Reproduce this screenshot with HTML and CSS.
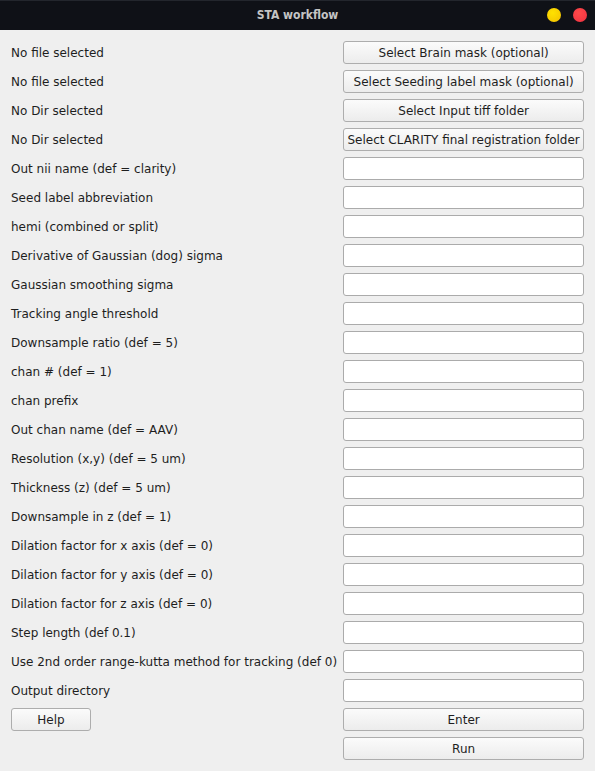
FILE: index.html
```html
<!DOCTYPE html>
<html>
<head>
<meta charset="utf-8">
<link rel="stylesheet" href="styles.css">
</head>
<body>
<div class="titlebar">
  <span class="title">STA workflow</span>
  <div class="controls">
    <span class="dot dot-min"></span>
    <span class="dot dot-close"></span>
  </div>
</div>
<div class="form">
  <span class="label">No file selected</span><button class="btn">Select Brain mask (optional)</button>
  <span class="label">No file selected</span><button class="btn">Select Seeding label mask (optional)</button>
  <span class="label">No Dir selected</span><button class="btn">Select Input tiff folder</button>
  <span class="label">No Dir selected</span><button class="btn">Select CLARITY final registration folder</button>
  <span class="label">Out nii name (def = clarity)</span><input class="field" type="text">
  <span class="label">Seed label abbreviation</span><input class="field" type="text">
  <span class="label">hemi (combined or split)</span><input class="field" type="text">
  <span class="label">Derivative of Gaussian (dog) sigma</span><input class="field" type="text">
  <span class="label">Gaussian smoothing sigma</span><input class="field" type="text">
  <span class="label">Tracking angle threshold</span><input class="field" type="text">
  <span class="label">Downsample ratio (def = 5)</span><input class="field" type="text">
  <span class="label">chan # (def = 1)</span><input class="field" type="text">
  <span class="label">chan prefix</span><input class="field" type="text">
  <span class="label">Out chan name (def = AAV)</span><input class="field" type="text">
  <span class="label">Resolution (x,y) (def = 5 um)</span><input class="field" type="text">
  <span class="label">Thickness (z) (def = 5 um)</span><input class="field" type="text">
  <span class="label">Downsample in z (def = 1)</span><input class="field" type="text">
  <span class="label">Dilation factor for x axis (def = 0)</span><input class="field" type="text">
  <span class="label">Dilation factor for y axis (def = 0)</span><input class="field" type="text">
  <span class="label">Dilation factor for z axis (def = 0)</span><input class="field" type="text">
  <span class="label">Step length (def 0.1)</span><input class="field" type="text">
  <span class="label">Use 2nd order range-kutta method for tracking (def 0)</span><input class="field" type="text">
  <span class="label">Output directory</span><input class="field" type="text">
  <div class="left-cell"><button class="btn btn-help">Help</button></div><button class="btn">Enter</button>
  <span></span><button class="btn">Run</button>
</div>
</body>
</html>
```
FILE: styles.css
```css
html, body {
  margin: 0;
  padding: 0;
  background: #efefef;
  width: 595px;
  height: 771px;
  overflow: hidden;
  font-family: "DejaVu Sans", sans-serif;
  font-size: 12px;
  color: #1e1e1e;
}

.titlebar {
  position: relative;
  height: 30px;
  background: #0f1117;
  border-top: 1px solid #23262d;
  box-sizing: border-box;
  display: flex;
  align-items: center;
  justify-content: center;
}

.title {
  font-family: "DejaVu Sans Condensed", "DejaVu Sans", sans-serif;
  font-weight: bold;
  font-size: 12px;
  color: #c4c4c4;
  margin-top: -1px;
}

.controls {
  position: absolute;
  right: 8px;
  top: 7px;
  display: flex;
  gap: 12px;
}

.dot {
  width: 14px;
  height: 14px;
  border-radius: 50%;
  display: block;
}

.dot-min {
  background: radial-gradient(circle at 40% 35%, #ffe200, #f3c000);
}

.dot-close {
  background: radial-gradient(circle at 40% 35%, #ff4a4a, #f03040);
}

.form {
  display: grid;
  grid-template-columns: 1fr 241px;
  grid-auto-rows: 23px;
  row-gap: 6px;
  column-gap: 6px;
  padding: 11px 11px 0 11px;
}

.label {
  display: block;
  white-space: nowrap;
  line-height: 23px;
  padding-top: 1px;
}

.left-cell {
  display: flex;
  align-items: center;
}

.btn {
  font-family: "DejaVu Sans", sans-serif;
  font-size: 12px;
  color: #1e1e1e;
  height: 23px;
  margin: 0;
  padding: 0 2px;
  border: 1px solid #adadad;
  border-radius: 3px;
  background: linear-gradient(#fbfbfb, #ececec);
  white-space: nowrap;
  box-sizing: border-box;
}

.btn-help {
  width: 80px;
}

.field {
  height: 23px;
  margin: 0;
  border: 1px solid #ababab;
  border-radius: 3px;
  background: #ffffff;
  box-sizing: border-box;
  padding: 0 3px;
  font-family: "DejaVu Sans", sans-serif;
  font-size: 12px;
}
```
